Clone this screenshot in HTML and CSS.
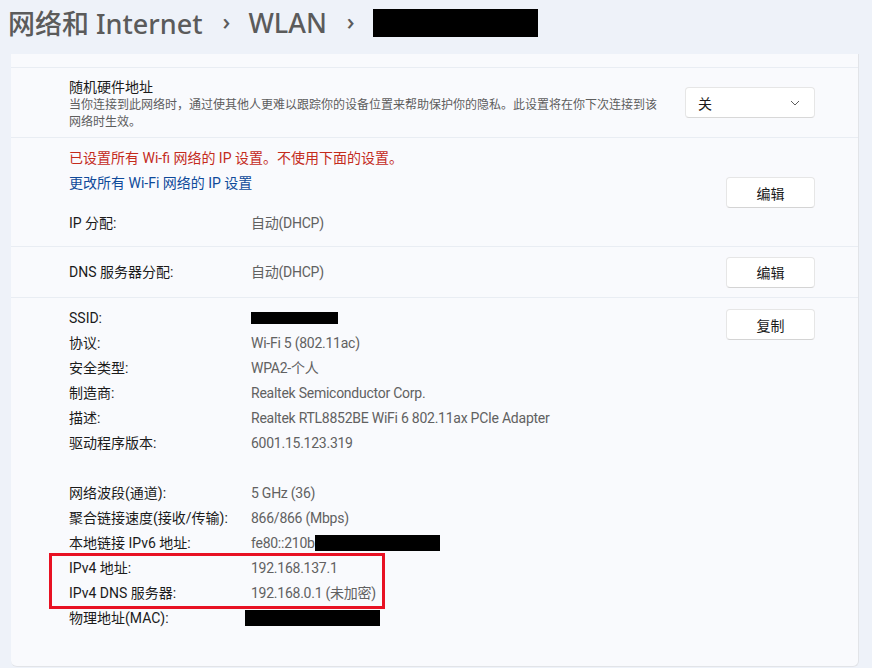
FILE: index.html
```html
<!DOCTYPE html>
<html lang="zh-CN">
<head>
  <meta charset="UTF-8">
  <meta name="viewport" content="width=device-width, initial-scale=1.0">
  <title>WLAN 属性</title>
  <link rel="stylesheet" href="styles.css">
</head>
<body>
  <h1 class="crumbs">
    <span class="crumb">网络和 Internet</span>
    <span class="crumb-sep">›</span>
    <span class="crumb">WLAN</span>
    <span class="crumb-sep">›</span>
    <span class="redact redact-title"></span>
  </h1>

  <div class="card">
    <div class="row row-top"></div>

    <div class="row row-setting">
      <div class="setting-text">
        <div class="setting-title">随机硬件地址</div>
        <div class="setting-desc">当你连接到此网络时，通过使其他人更难以跟踪你的设备位置来帮助保护你的隐私。此设置将在你下次连接到该网络时生效。</div>
      </div>
      <div class="select">
        <span>关</span>
        <svg class="chevron" width="10" height="6" viewBox="0 0 10 6"><path d="M1 1l4 4 4-4" fill="none" stroke="#5f5f5f" stroke-width="1"/></svg>
      </div>
    </div>

    <div class="row row-ip">
      <div class="ip-info">
        <div class="warn">已设置所有 Wi-fi 网络的 IP 设置。不使用下面的设置。</div>
        <a class="link" href="#">更改所有 Wi-Fi 网络的 IP 设置</a>
        <div class="kv kv-ip">
          <span class="k">IP 分配:</span>
          <span class="v">自动(DHCP)</span>
        </div>
      </div>
      <button class="btn btn-edit1">编辑</button>
    </div>

    <div class="row row-dns">
      <div class="kv">
        <span class="k">DNS 服务器分配:</span>
        <span class="v">自动(DHCP)</span>
      </div>
      <button class="btn">编辑</button>
    </div>

    <div class="row row-details">
      <div class="details">
        <div class="kv"><span class="k">SSID:</span><span class="v"><span class="redact redact-ssid"></span></span></div>
        <div class="kv"><span class="k">协议:</span><span class="v">Wi-Fi 5 (802.11ac)</span></div>
        <div class="kv"><span class="k">安全类型:</span><span class="v">WPA2-个人</span></div>
        <div class="kv"><span class="k">制造商:</span><span class="v">Realtek Semiconductor Corp.</span></div>
        <div class="kv"><span class="k">描述:</span><span class="v">Realtek RTL8852BE WiFi 6 802.11ax PCIe Adapter</span></div>
        <div class="kv"><span class="k">驱动程序版本:</span><span class="v">6001.15.123.319</span></div>
        <div class="kv kv-gap"></div>
        <div class="kv"><span class="k">网络波段(通道):</span><span class="v">5 GHz (36)</span></div>
        <div class="kv"><span class="k">聚合链接速度(接收/传输):</span><span class="v">866/866 (Mbps)</span></div>
        <div class="kv"><span class="k">本地链接 IPv6 地址:</span><span class="v">fe80::210b<span class="redact redact-ipv6"></span></span></div>
        <div class="highlight">
          <div class="kv"><span class="k">IPv4 地址:</span><span class="v">192.168.137.1</span></div>
          <div class="kv"><span class="k">IPv4 DNS 服务器:</span><span class="v">192.168.0.1 (未加密)</span></div>
        </div>
        <div class="kv"><span class="k">物理地址(MAC):</span><span class="v"><span class="redact redact-mac"></span></span></div>
      </div>
      <button class="btn">复制</button>
    </div>
  </div>
</body>
</html>
```

FILE: styles.css
```css
*{
  margin: 0;
  padding: 0;
  box-sizing: border-box;
}

body{
  background: #eef2f9;
  font-family: Roboto, "Noto Sans CJK SC", sans-serif;
  font-size: 14px;
  color: #1b1b1b;
  height: 668px;
  overflow: hidden;
}

.crumbs{
  display: flex;
  align-items: center;
  height: 45px;
  padding-left: 8px;
  font-family: "Noto Sans", "Noto Sans CJK SC", sans-serif;
  font-size: 27px;
  font-weight: 500;
  color: #5b5b5b;
  margin-bottom: 9px;
}

.crumb-sep{
  font-size: 24px;
  margin: 0 18px 0 20px;
  position: relative;
  top: -2px;
}

.redact{
  display: inline-block;
  background: #000;
  vertical-align: middle;
}

.redact-title{
  width: 165px;
  height: 28px;
}

.card{
  margin-left: 11px;
  width: 848px;
  height: 613px;
  background: #f9fafd;
  border-right: 1px solid #e2e4e8;
  border-bottom: 1px solid #e2e4e8;
  border-radius: 0 0 6px 6px;
}

.row{
  display: flex;
  align-items: center;
  justify-content: space-between;
  padding: 0 43px 0 58px;
  border-bottom: 1px solid #e9edf3;
}

.row-top{
  height: 14px;
}

.row-setting{
  height: 70px;
  padding-top: 2px;
}

.setting-title{
  line-height: 20px;
  color: #1b1b1b;
}

.setting-desc{
  width: 592px;
  font-size: 12px;
  line-height: 17px;
  color: #5d5d5d;
}

.select{
  width: 130px;
  height: 31px;
  display: flex;
  align-items: center;
  justify-content: space-between;
  padding: 0 14px 0 12px;
  background: #fff;
  border: 1px solid #e6e6e6;
  border-bottom-color: #d8d8d8;
  border-radius: 4px;
  margin-bottom: 2px;
}

.row-ip{
  height: 109px;
  align-items: flex-start;
}

.ip-info{
  padding-top: 8px;
}

.warn{
  color: #c42b1c;
  line-height: 24px;
}

.link{
  display: block;
  color: #0f4a9a;
  text-decoration: none;
  line-height: 26px;
}

.kv{
  display: flex;
  line-height: 25px;
}

.kv-ip{
  margin-top: 15px;
}

.k{
  width: 182px;
  flex-shrink: 0;
  color: #1b1b1b;
}

.v{
  color: #616161;
  white-space: nowrap;
  letter-spacing: -0.25px;
}

.btn{
  width: 89px;
  height: 31px;
  background: #fff;
  border: 1px solid #e6e6e6;
  border-bottom-color: #d4d4d4;
  border-radius: 4px;
  font-family: inherit;
  font-size: 14px;
  color: #1b1b1b;
}

.btn-edit1{
  margin-top: 39px;
}

.row-dns{
  height: 51px;
}

.row-details{
  align-items: flex-start;
  padding-top: 8px;
  border-bottom: none;
}

.row-details .btn{
  margin-top: 3px;
}

.kv-gap{
  height: 25px;
}

.redact-ssid{
  width: 87px;
  height: 12px;
  margin-top: -3px;
}

.redact-ipv6{
  width: 125px;
  height: 16px;
  margin-top: -2px;
}

.redact-mac{
  width: 135px;
  height: 16px;
  margin-left: -6px;
  margin-top: -2px;
}

.highlight{
  width: 336px;
  margin: -3px 0 -3px -20px;
  padding-left: 17px;
  border: 3px solid #e81123;
}
```
